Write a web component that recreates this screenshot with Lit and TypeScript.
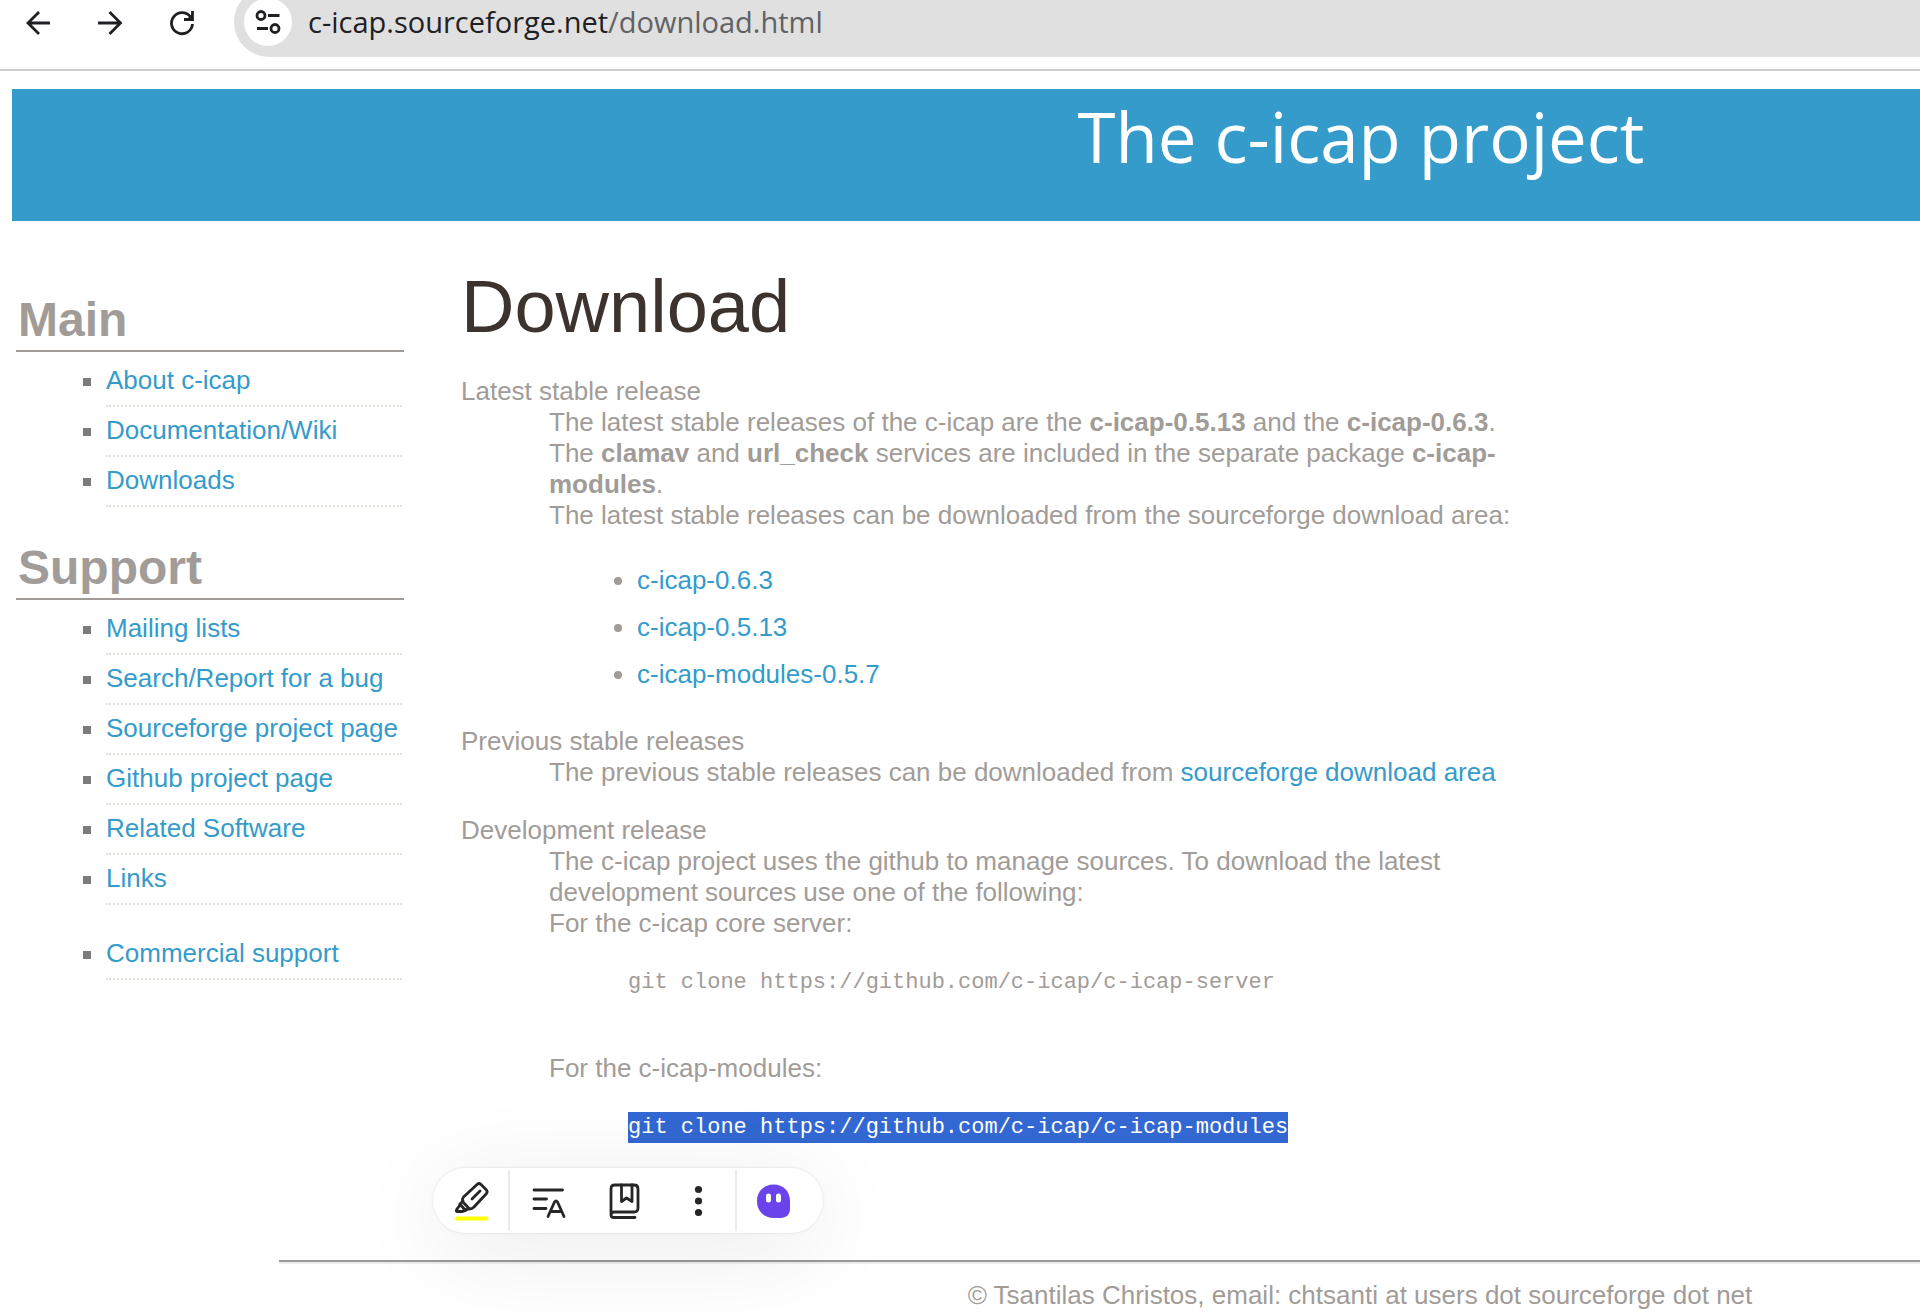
import { LitElement, html, css } from "lit";
import { customElement } from "lit/decorators.js";

const mainLinks = ["About c-icap", "Documentation/Wiki", "Downloads"];
const supportLinks = [
  "Mailing lists",
  "Search/Report for a bug",
  "Sourceforge project page",
  "Github project page",
  "Related Software",
  "Links",
];
const packages = ["c-icap-0.6.3", "c-icap-0.5.13", "c-icap-modules-0.5.7"];

@customElement("browser-bar")
class BrowserBar extends LitElement {
  static styles = css`
    :host {
      display: flex;
      align-items: flex-start;
      height: 69px;
      border-bottom: 2px solid #cdcdcd;
      background: #fff;
      font-family: "Open Sans", "Noto Sans", sans-serif;
      overflow: hidden;
    }
    button {
      border: 0;
      padding: 0;
      background: none;
      display: block;
      flex: none;
    }
    .nav {
      display: flex;
      gap: 32px;
      padding: 3px 0 0 18px;
    }
    .nav button {
      width: 40px;
      height: 40px;
    }
    .field {
      flex: 1;
      display: flex;
      align-items: center;
      gap: 16px;
      box-sizing: border-box;
      height: 70px;
      margin: -13px 0 0 32px;
      padding: 0 10px;
      border-radius: 35px 0 0 35px;
      background: #e0e0e0;
    }
    .site {
      width: 48px;
      height: 48px;
      border-radius: 50%;
      background: #fff;
    }
    .url {
      font-size: 29px;
      line-height: 40px;
      color: #606266;
    }
    .host {
      color: #1f2023;
    }
    svg {
      display: block;
      fill: none;
      stroke: #1f2023;
      stroke-width: 2.8;
    }
  `;

  render() {
    return html`
      <nav class="nav" aria-label="Browser">
        <button aria-label="Back">
          <svg width="40" height="40"><path d="M32 20H10.5M21 9L10 20L21 31" /></svg>
        </button>
        <button aria-label="Forward">
          <svg width="40" height="40"><path d="M8 20H30M19.5 9L30.5 20L19.5 31" /></svg>
        </button>
        <button aria-label="Reload">
          <svg width="40" height="40">
            <path d="M28.5 14A10.5 10.5 0 1 0 30.5 21M30.5 8V16.5H22" />
            <path d="M25 16H30V11Z" fill="#1f2023" stroke="none" />
          </svg>
        </button>
      </nav>
      <div class="field">
        <button class="site" aria-label="Site information">
          <svg width="48" height="48">
            <circle cx="17" cy="17.5" r="4" />
            <path d="M24 17.5H35.5M13 30.5H24" />
            <circle cx="31" cy="30.5" r="4" />
          </svg>
        </button>
        <span class="url"><span class="host">c-icap.sourceforge.net</span>/download.html</span>
      </div>
    `;
  }
}

@customElement("side-menu")
class SideMenu extends LitElement {
  static styles = css`
    :host {
      display: block;
    }
    h2 {
      margin: 0;
      padding: 0 2px 2px;
      border-bottom: 2px solid #a19c98;
      font-size: 48px;
      line-height: 56px;
      color: #a19c98;
    }
    ul {
      list-style: none;
      margin: 0 2px 33px 67px;
      padding: 5px 0 0;
    }
    li {
      display: flex;
      align-items: center;
      gap: 15px;
      line-height: 31px;
    }
    li::before {
      content: "";
      flex: none;
      width: 8px;
      height: 8px;
      background: #7b7b7b;
    }
    .entry {
      flex: 1;
      padding: 8px 0 9px;
      border-bottom: 2px dotted #e4e0da;
      white-space: nowrap;
    }
    .apart {
      margin-top: 25px;
    }
    a {
      color: #349bcb;
      text-decoration: none;
    }
  `;

  private entry(label: string, cls = "") {
    return html`<li class=${cls}><div class="entry"><a href="#">${label}</a></div></li>`;
  }

  render() {
    return html`
      <h2>Main</h2>
      <ul>${mainLinks.map((l) => this.entry(l))}</ul>
      <h2>Support</h2>
      <ul>
        ${supportLinks.map((l) => this.entry(l))} ${this.entry("Commercial support", "apart")}
      </ul>
    `;
  }
}

@customElement("selection-toolbar")
class SelectionToolbar extends LitElement {
  static styles = css`
    :host {
      display: flex;
      align-items: center;
      box-sizing: border-box;
      height: 65px;
      padding-right: 12px;
      border-radius: 33px;
      background: #fff;
      box-shadow: 0 0 3px rgba(0, 0, 0, 0.12), 0 16px 96px rgba(0, 0, 0, 0.09);
    }
    button {
      box-sizing: border-box;
      width: 75px;
      height: 61px;
      display: grid;
      place-items: center;
      border: 0;
      padding: 0;
      background: none;
    }
    .first {
      width: 77px;
      border-right: 2px solid #ebebeb;
    }
    .last {
      width: 76px;
      border-left: 2px solid #ebebeb;
    }
    svg {
      fill: none;
      stroke: #262626;
      stroke-width: 2.8;
      stroke-linecap: round;
      stroke-linejoin: round;
    }
  `;

  render() {
    return html`
      <button class="first" aria-label="Highlight">
        <svg width="44" height="44">
          <path
            d="M28 5.5Q30 3.5 32 5.5L37 10.5Q39 12.5 37.5 14.5L25 28Q23 30 20.5 30L13.5 22.5Q13 20 14.5 18Z"
          />
          <path d="M14 22L11 25Q10.5 27.5 8 30Q6 32.5 9 32.5H13Q16 32 19 30M11 25L16 31M23 20L31 12" />
          <path d="M8 39.5H37.5" stroke="#ffff00" stroke-width="4" />
        </svg>
      </button>
      <button aria-label="Translate">
        <svg width="44" height="44">
          <path d="M8 11H36.5M8 20H20.5M8 29.5H20M22 37.5L28.5 23Q30 21 31.5 23L38 37.5M25 32.5H35" />
        </svg>
      </button>
      <button aria-label="Save">
        <svg width="44" height="44">
          <path
            d="M10 36V10Q10 6 14 6H33Q37 6 37 10V29Q37 33 33 33H13Q10 33 10 36Q10 38.5 13 38.5H34"
          />
          <path d="M20.5 6V22.5L25.5 19L31 22.5V6" />
        </svg>
      </button>
      <button aria-label="More">
        <svg width="44" height="44">
          <g fill="#262626" stroke="none">
            <circle cx="22.5" cy="10.5" r="3.6" />
            <circle cx="22.5" cy="22" r="3.6" />
            <circle cx="22.5" cy="33.5" r="3.6" />
          </g>
        </svg>
      </button>
      <button class="last" aria-label="Assistant">
        <svg width="44" height="44">
          <g stroke="none">
            <path
              fill="#6b43ec"
              d="M21.5 5.5C31.5 5.5 38 12.5 38 22V30C38 35.5 34 39 29 39H22C12 39 5 32 5 22C5 12.5 12 5.5 21.5 5.5Z"
            />
            <rect x="14" y="14.5" width="5" height="9" rx="2.5" fill="#fff" />
            <rect x="24" y="14.5" width="5" height="9" rx="2.5" fill="#fff" />
          </g>
        </svg>
      </button>
    `;
  }
}

@customElement("app-root")
class AppRoot extends LitElement {
  static styles = css`
    :host {
      display: block;
      background: #fff;
      color: #a19c98;
      font: 26px/31px "Liberation Sans", Arial, sans-serif;
    }
    .banner {
      margin: 18px 0 0 12px;
      padding-left: 790px;
      height: 132px;
      box-sizing: border-box;
      background: #349bcb;
      color: #fff;
      text-align: center;
    }
    .banner h1 {
      margin: 0;
      font: 400 69px/94px "Open Sans", "Noto Sans", sans-serif;
    }
    .columns {
      display: grid;
      grid-template-columns: 388px minmax(0, 1068px);
      column-gap: 57px;
      padding: 50px 0 0 16px;
    }
    side-menu {
      padding-top: 21px;
    }
    .content h2 {
      margin: 0;
      font-size: 74px;
      font-weight: 400;
      line-height: 72px;
      color: #3d332e;
    }
    dl {
      margin: 33px 0 0;
    }
    dd {
      margin: 0 0 27px 88px;
    }
    ul {
      margin: 34px 0 36px;
      padding-left: 88px;
      list-style: disc;
    }
    li {
      margin-bottom: 16px;
    }
    a {
      color: #349bcb;
      text-decoration: none;
    }
    pre {
      margin: 28px 0 26px 79px;
      font: 22px/31px "Liberation Mono", monospace;
    }
    .gap {
      margin-bottom: 55px;
    }
    .picked {
      position: relative;
      display: inline-block;
      background: #3367d1;
      color: #fff;
    }
    selection-toolbar {
      position: absolute;
      top: 56px;
      left: -195px;
    }
    footer {
      margin: 90px 0 0 279px;
    }
    hr {
      margin: 0;
      border: 0;
      border-top: 2px solid #999;
      border-bottom: 2px solid #eee;
    }
    .credit {
      margin: 0;
      padding: 16px 0 0 521px;
      text-align: center;
    }
  `;

  render() {
    return html`
      <browser-bar></browser-bar>
      <header class="banner"><h1>The c-icap project</h1></header>
      <div class="columns">
        <side-menu></side-menu>
        <main class="content">
          <h2>Download</h2>
          <dl>
            <dt>Latest stable release</dt>
            <dd>
              The latest stable releases of the c-icap are the <b>c-icap-0.5.13</b> and the
              <b>c-icap-0.6.3</b>.<br />
              The <b>clamav</b> and <b>url_check</b> services are included in the separate package
              <b>c-icap-<br />modules</b>.<br />
              The latest stable releases can be downloaded from the sourceforge download area:
              <ul>
                ${packages.map((p) => html`<li><a href="#">${p}</a></li>`)}
              </ul>
            </dd>
            <dt>Previous stable releases</dt>
            <dd>
              The previous stable releases can be downloaded from
              <a href="#">sourceforge download area</a>
            </dd>
            <dt>Development release</dt>
            <dd>
              The c-icap project uses the github to manage sources. To download the latest<br />
              development sources use one of the following:<br />
              For the c-icap core server:
              <pre class="gap">git clone https://github.com/c-icap/c-icap-server</pre>
              For the c-icap-modules:
              <pre><span class="picked">git clone https://github.com/c-icap/c-icap-modules<selection-toolbar></selection-toolbar></span></pre>
            </dd>
          </dl>
        </main>
      </div>
      <footer>
        <hr />
        <p class="credit">© Tsantilas Christos, email: chtsanti at users dot sourceforge dot net</p>
      </footer>
    `;
  }
}
